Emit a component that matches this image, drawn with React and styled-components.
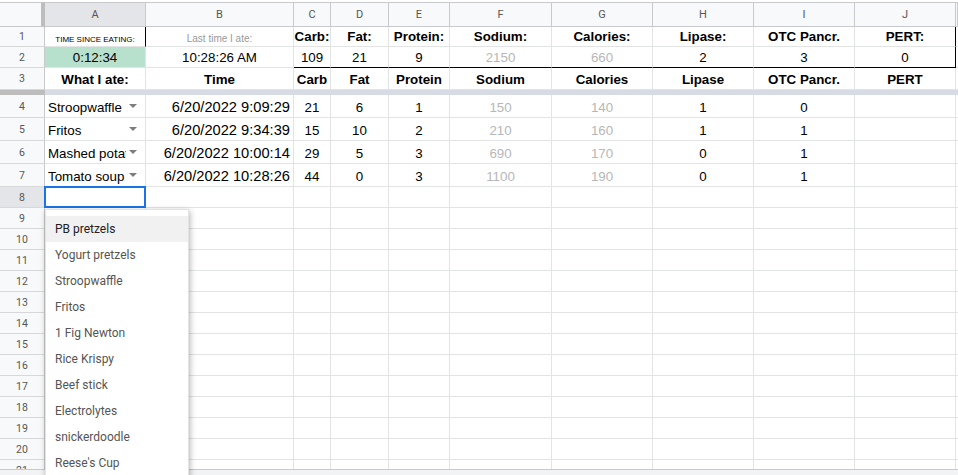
import React from "react";
import styled, { createGlobalStyle } from "styled-components";

const COLS = "45px 101px 148px 37px 58px 61px 102px 101px 101px 101px 101px 1fr";
const LETTERS = ["A", "B", "C", "D", "E", "F", "G", "H", "I", "J", ""];
const LINE = "#e2e3e3";
const HEAD_LINE = "#c7c9cc";

const GlobalStyle = createGlobalStyle`
  *, *::before, *::after { box-sizing: border-box; }
  html, body { margin: 0; padding: 0; background: #fff; }
  body { font-family: "Liberation Sans", Arial, sans-serif; overflow: hidden; }
`;

const Page = styled.div`
  position: relative;
  height: 475px;
  overflow: hidden;
  display: flex;
  flex-direction: column;
  background: #fff;
`;

const Sheet = styled.div`
  flex: 1;
  min-height: 0;
  overflow: hidden;
  padding-top: 2px;
  display: flex;
  flex-direction: column;
`;

const Row = styled.div`
  display: grid;
  grid-template-columns: ${COLS};
  height: ${p => p.$h}px;
  flex: none;
`;

const Corner = styled.div`
  background: #f8f9fa;
  border-top: 1px solid ${HEAD_LINE};
  border-bottom: 1px solid ${HEAD_LINE};
  border-right: 4px solid #bdbdbd;
`;

const ColHead = styled.div`
  display: flex;
  align-items: center;
  justify-content: center;
  background: ${p => (p.$active ? "#e3e5e8" : "#f8f9fa")};
  border-top: 1px solid ${HEAD_LINE};
  border-bottom: 1px solid ${HEAD_LINE};
  border-right: 1px solid ${HEAD_LINE};
  font: 11px Roboto, "Liberation Sans", sans-serif;
  color: #575757;
`;

const RowHead = styled.div`
  display: flex;
  align-items: center;
  justify-content: center;
  background: ${p => (p.$active ? "#e3e5e8" : "#f8f9fa")};
  border-right: 1px solid ${HEAD_LINE};
  border-bottom: 1px solid #d6d8da;
  font: 10.5px Roboto, "Liberation Sans", sans-serif;
  color: #575757;
`;

const justify = { left: "flex-start", right: "flex-end", center: "center" };

const Cell = styled.div`
  position: relative;
  display: flex;
  align-items: flex-end;
  justify-content: ${p => justify[p.$align || "center"]};
  padding: 0 3px 2px 3px;
  border-right: 1px solid ${p => (p.$rb ? "#000" : LINE)};
  border-bottom: 1px solid ${p => (p.$bb ? "#000" : LINE)};
  background: ${p => p.$bg || "#fff"};
  font-size: ${p => p.$size || "13.33px"};
  font-weight: ${p => (p.$bold ? 700 : 400)};
  color: ${p => p.$color || "#000"};
  white-space: nowrap;
  overflow: ${p => (p.$selected ? "visible" : "hidden")};

  ${p =>
    p.$selected &&
    `
    &::after {
      content: "";
      position: absolute;
      left: -1px;
      top: -1px;
      right: -1px;
      bottom: -1px;
      border: 2px solid #1a73e8;
      z-index: 2;
    }
  `}
`;

const CellText = styled.span`
  flex: 1;
  min-width: 0;
  overflow: hidden;
`;

const Caret = styled.span`
  align-self: center;
  flex: none;
  margin: 2px 5px 0 3px;
  width: 0;
  height: 0;
  border-left: 4px solid transparent;
  border-right: 4px solid transparent;
  border-top: 4px solid #7d7d7d;
`;

const BandHead = styled.div`
  background: #bdbdbd;
`;

const BandFill = styled.div`
  grid-column: 2 / -1;
  background: #d7dbe3;
`;

const Menu = styled.div`
  position: absolute;
  left: 45px;
  top: 209px;
  width: 144px;
  height: 300px;
  padding-top: 6px;
  background: #fff;
  border: 1px solid #e3e3e3;
  box-shadow: 1px 2px 6px rgba(0, 0, 0, 0.3);
  z-index: 5;
`;

const MenuItem = styled.div`
  height: 26px;
  display: flex;
  align-items: center;
  padding-left: 9px;
  font: 12px Roboto, "Liberation Sans", sans-serif;
  color: ${p => (p.$hot ? "#202124" : "#555")};
  background: ${p => (p.$hot ? "#f1f1f1" : "transparent")};
  white-space: nowrap;
`;

const BottomBar = styled.div`
  flex: none;
  height: 6px;
  border-top: 1px solid ${HEAD_LINE};
  background: #f1f3f4;
`;

const MUTED = "#b7b7b7";

const totals = [
  { label: "Carb:", value: "109" },
  { label: "Fat:", value: "21" },
  { label: "Protein:", value: "9" },
  { label: "Sodium:", value: "2150", muted: true },
  { label: "Calories:", value: "660", muted: true },
  { label: "Lipase:", value: "2" },
  { label: "OTC Pancr.", value: "3" },
  { label: "PERT:", value: "0" },
];

const columns = ["Carb", "Fat", "Protein", "Sodium", "Calories", "Lipase", "OTC Pancr.", "PERT"];

const log = [
  { food: "Stroopwaffle", time: "6/20/2022 9:09:29", vals: ["21", "6", "1", "150", "140", "1", "0", ""] },
  { food: "Fritos", time: "6/20/2022 9:34:39", vals: ["15", "10", "2", "210", "160", "1", "1", ""] },
  { food: "Mashed potatoes", time: "6/20/2022 10:00:14", vals: ["29", "5", "3", "690", "170", "0", "1", ""] },
  { food: "Tomato soup", time: "6/20/2022 10:28:26", vals: ["44", "0", "3", "1100", "190", "0", "1", ""] },
];

const options = [
  "PB pretzels",
  "Yogurt pretzels",
  "Stroopwaffle",
  "Fritos",
  "1 Fig Newton",
  "Rice Krispy",
  "Beef stick",
  "Electrolytes",
  "snickerdoodle",
  "Reese's Cup",
];

const mutedCol = i => i === 3 || i === 4;

function EmptyRow({ n, h = 21, active, selectFirst }) {
  return (
    <Row $h={h}>
      <RowHead $active={active}>{n}</RowHead>
      {LETTERS.map((l, i) => (
        <Cell key={i} $selected={selectFirst && i === 0} />
      ))}
    </Row>
  );
}

export default function App() {
  return (
    <Page>
      <GlobalStyle />
      <Sheet>
        <Row $h={25}>
          <Corner />
          {LETTERS.map((l, i) => (
            <ColHead key={i} $active={l === "A"}>{l}</ColHead>
          ))}
        </Row>

        <Row $h={20}>
          <RowHead>1</RowHead>
          <Cell $rb $size="8px">TIME SINCE EATING:</Cell>
          <Cell $size="10px" $color="#9a9a9a">Last time I ate:</Cell>
          {totals.map((t, i) => (
            <Cell key={t.label} $bold $rb={i === totals.length - 1}>{t.label}</Cell>
          ))}
          <Cell />
        </Row>

        <Row $h={21}>
          <RowHead>2</RowHead>
          <Cell $bg="#b7e1cd">0:12:34</Cell>
          <Cell>10:28:26 AM</Cell>
          {totals.map((t, i) => (
            <Cell key={t.label} $bb $rb={i === totals.length - 1} $color={t.muted ? MUTED : "#000"}>
              {t.value}
            </Cell>
          ))}
          <Cell />
        </Row>

        <Row $h={22}>
          <RowHead>3</RowHead>
          <Cell $bold>What I ate:</Cell>
          <Cell $bold>Time</Cell>
          {columns.map(c => (
            <Cell key={c} $bold>{c}</Cell>
          ))}
          <Cell />
        </Row>

        <Row $h={5}>
          <BandHead />
          <BandFill />
        </Row>

        {log.map((r, idx) => (
          <Row $h={23} key={r.time}>
            <RowHead>{idx + 4}</RowHead>
            <Cell $align="left">
              <CellText>{r.food}</CellText>
              <Caret />
            </Cell>
            <Cell $align="right" $size="14.67px">{r.time}</Cell>
            {r.vals.map((v, i) => (
              <Cell key={i} $color={mutedCol(i) ? MUTED : "#000"}>{v}</Cell>
            ))}
            <Cell />
          </Row>
        ))}

        <EmptyRow n={8} active selectFirst />
        {Array.from({ length: 13 }, (_, i) => (
          <EmptyRow key={i} n={i + 9} />
        ))}
      </Sheet>
      <BottomBar />

      <Menu>
        {options.map((o, i) => (
          <MenuItem key={o} $hot={i === 0}>{o}</MenuItem>
        ))}
      </Menu>
    </Page>
  );
}
